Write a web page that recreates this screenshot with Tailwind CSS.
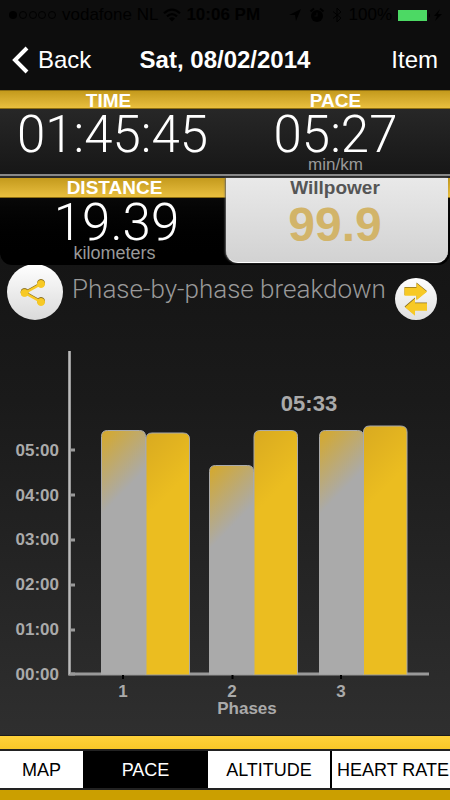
<!DOCTYPE html>
<html lang="en">
<head>
<meta charset="utf-8">
<meta name="viewport" content="width=device-width, initial-scale=1">
<title>Workout – Pace</title>
<script src="https://cdn.jsdelivr.net/npm/@tailwindcss/browser@4"></script>
</head>
<body class="flex min-h-screen flex-col bg-linear-to-b from-[#0c0c0c] via-[#1a1a1a] to-[#333333] font-['Liberation_Sans',sans-serif] text-white">

<header class="bg-[#0d0d0d]">
  <div class="flex h-7 items-center gap-1 px-2 pt-px text-[17px] text-black">
    <svg class="h-4 w-12 shrink-0" viewBox="0 0 48 16" aria-hidden="true">
      <circle cx="5" cy="8" r="4"/>
      <g fill="none" stroke="#000"><circle cx="15" cy="8" r="3.5"/><circle cx="25" cy="8" r="3.5"/><circle cx="34" cy="8" r="3.5"/><circle cx="44" cy="8" r="3.5"/></g>
    </svg>
    <span class="whitespace-nowrap pl-0.5">vodafone NL</span>
    <svg class="h-4 w-5 shrink-0" viewBox="0 0 20 16" aria-hidden="true">
      <g fill="none" stroke="#000" stroke-width="2.2"><path d="M2 6.2Q10-1 18 6.2"/><path d="M5 9.4Q10 4.800 15 9.400"/></g><path d="M7 11.500Q10 9 13 11.500L10 14.500Z"/>
    </svg>
    <span class="whitespace-nowrap font-bold">10:06 PM</span>
    <div class="ml-auto flex items-center gap-1.5">
      <svg class="h-4 w-4" viewBox="0 0 16 16" aria-hidden="true"><path d="M2 8 14 2 9 14 8 8Z"/></svg>
      <svg class="h-4 w-4" viewBox="0 0 16 16" aria-hidden="true"><circle cx="8" cy="9" r="6"/><path d="M1.500 4.500 5 1.500M14.500 4.500 11 1.500" stroke="#000" stroke-width="2"/><path d="M8 5.500V9H5.500" fill="none" stroke="#0d0d0d" stroke-width="1.200"/></svg>
      <svg class="h-4 w-3" viewBox="0 0 12 16" aria-hidden="true"><path d="M2 4.500 10 11 6 15V1L10 5 2 11.500" fill="none" stroke="#000" stroke-width="1"/></svg>
      <span>100%</span>
      <svg class="h-4 w-11" viewBox="0 0 44 16" aria-hidden="true"><rect y="3" width="29" height="11" fill="#4cd964"/><path d="M31 6q2 2.500 0 5zM42 2 36 9h3l-2 5 7-7h-4z"/></svg>
    </div>
  </div>
  <nav class="grid h-[62px] grid-cols-[1fr_auto_1fr] items-center px-3 pt-0.5 text-2xl">
    <a href="#" class="flex items-center gap-2">
      <svg class="h-7 w-[18px]" viewBox="0 0 18 28" aria-hidden="true"><path d="M15 2 3 14 15 26" fill="none" stroke="#fff" stroke-width="4"/></svg>
      <span>Back</span>
    </a>
    <h1 class="font-bold">Sat, 08/02/2014</h1>
    <button type="button" class="justify-self-end">Item</button>
  </nav>
</header>

<main class="flex grow flex-col">
  <section aria-label="Summary">
    <div class="grid grid-cols-2 border-b-2 border-[#888] bg-linear-to-b from-[#2c2c2c] to-[#171717] text-center">
      <div>
        <h2 class="h-[19px] border-y border-[#8e6e12] bg-linear-to-b from-[#c49a1c] to-[#e9bf3e] pr-2 text-[19px] leading-5 font-bold">TIME</h2>
        <p class="h-[65px] font-['Roboto'] text-[51px] leading-[52px] font-light">01:45:45</p>
      </div>
      <div>
        <h2 class="h-[19px] border-y border-[#8e6e12] bg-linear-to-b from-[#c49a1c] to-[#e9bf3e] pr-1 text-[19px] leading-5 font-bold">PACE</h2>
        <p class="h-[46px] pr-1 font-['Roboto'] text-[51px] leading-[52px] font-light">05:27</p>
        <p class="h-[19px] pr-1 text-[17px] leading-5 text-[#999]">min/km</p>
      </div>
    </div>
    <div class="relative rounded-b-xl border-t-2 border-[#2a2a2a] bg-linear-to-b from-[#111] to-black">
      <div class="absolute inset-x-0 top-0 h-5 border-b border-[#8e6e12] bg-linear-to-b from-[#c49a1c] to-[#e9bf3e]"></div>
      <div class="relative grid grid-cols-2 text-center">
        <div class="pl-1">
          <h2 class="h-5 text-[19px] leading-5 font-bold">DISTANCE</h2>
          <p class="h-[46px] pl-1 font-['Roboto'] text-[51px] leading-[50px] font-light">19.39</p>
          <p class="h-[21px] text-lg leading-[18px] text-[#999]">kilometers</p>
        </div>
        <div class="mr-[2px] mb-[2px] ml-px rounded-b-xl border-b border-white bg-linear-to-b from-[#e9e9e9] to-[#d2d2d2] shadow-[-1px_0_2px_#666]">
          <h2 class="h-5 pr-1 text-[19px] leading-[19px] font-bold text-[#555]">Willpower</h2>
          <p class="pr-1 text-5xl leading-[54px] font-bold text-[#d2b469]">99.9</p>
        </div>
      </div>
    </div>
  </section>

  <section class="flex grow flex-col" aria-labelledby="breakdown">
    <div class="flex h-14 items-start justify-between pr-[13px] pl-[7px]">
      <button type="button" aria-label="Share" class="-mt-px size-14 shrink-0 rounded-full bg-linear-to-b from-white to-[#dadada]">
        <svg class="size-14" viewBox="0 0 56 56" aria-hidden="true">
          <g transform="translate(0 -1)" fill="#8b7020" stroke="#8b7020"><path d="M34 20 18 29 34 38" fill="none" stroke-width="2"/><circle cx="34" cy="20" r="3.500"/><circle cx="17.500" cy="29" r="3.500"/><circle cx="34" cy="38" r="3.500"/></g>
          <g fill="#f7c925" stroke="#f7c925"><path d="M34 20 18 29 34 38" fill="none" stroke-width="2.500"/><circle cx="34" cy="20" r="3.500"/><circle cx="17.500" cy="29" r="3.500"/><circle cx="34" cy="38" r="3.500"/></g>
        </svg>
      </button>
      <h2 id="breakdown" class="pt-1 font-['Roboto'] text-[26px] leading-10 font-light whitespace-nowrap text-[#999]">Phase-by-phase breakdown</h2>
      <button type="button" aria-label="Compare" class="mt-[13px] size-[42px] shrink-0 rounded-full bg-linear-to-b from-white to-[#dfdfdf]">
        <svg class="size-[42px]" viewBox="0 0 42 42" aria-hidden="true">
          <path d="M9.500 9H21.500V4.500L32 13 21.500 21.500V17H9.500ZM32 24.500H20V19.500L9.500 28.500 20 37V32H32Z" fill="#8b7020"/>
          <path d="M9.500 9.800H21.500V5.300L32 13.800 21.500 22.300V17.800H9.500ZM32 25.300H20V20.500L10 29.300 20 37.800V32.800H32Z" fill="#f7c925"/>
        </svg>
      </button>
    </div>

    <svg class="w-full grow" viewBox="0 321 450 414" role="img" aria-label="Pace for each phase">
      <defs>
        <linearGradient id="fadeA" gradientUnits="userSpaceOnUse" x1="0" y1="0" x2="42" y2="41">
          <stop offset="0" stop-color="#d6a929"/><stop offset="1" stop-color="#aaaaaa"/>
        </linearGradient>
        <linearGradient id="fadeB" gradientUnits="userSpaceOnUse" x1="0" y1="0" x2="42" y2="41">
          <stop offset="0" stop-color="#d9aa20"/><stop offset="1" stop-color="#ebbd20"/>
        </linearGradient>
      </defs>
      <path d="M68 674H429" stroke="#999" stroke-width="3"/>
      <path d="M123 675v4M232.500 675v4M341 675v4" stroke="#000" stroke-width="2"/>
      <g stroke="#aaa" stroke-width="1">
        <path transform="translate(101.500 430.500)" d="M0 244V6Q0 0 6 0H38Q44 0 44 6V244" fill="url(#fadeA)"/>
        <path transform="translate(146 433)" d="M0 241.500V6Q0 0 6 0H37Q43.500 0 43.500 6V241.500" fill="url(#fadeB)"/>
        <path transform="translate(209.500 465.500)" d="M0 209V6Q0 0 6 0H38Q44 0 44 6V209" fill="url(#fadeA)"/>
        <path transform="translate(254 430.500)" d="M0 244V6Q0 0 6 0H37Q43.500 0 43.500 6V244" fill="url(#fadeB)"/>
        <path transform="translate(319.500 430.500)" d="M0 244V6Q0 0 6 0H38Q44 0 44 6V244" fill="url(#fadeA)"/>
        <path transform="translate(363.500 426)" d="M0 248.500V6Q0 0 6 0H37Q43.500 0 43.500 6V248.500" fill="url(#fadeB)"/>
      </g>
      <path d="M69.500 351V675M69 450h6M69 495h6M69 540h6M69 585h6M69 630h6M69 674h6" fill="none" stroke="#999" stroke-width="3"/>
      <path d="M69.500 351V674" stroke="#bbb" stroke-width="1"/>
      <g fill="#aaa" class="text-[17px] font-bold" text-anchor="end">
        <text x="59" y="456">05:00</text>
        <text x="59" y="501">04:00</text>
        <text x="59" y="545">03:00</text>
        <text x="59" y="590">02:00</text>
        <text x="59" y="635">01:00</text>
        <text x="59" y="680">00:00</text>
      </g>
      <g fill="#aaa" class="text-[17px] font-bold" text-anchor="middle">
        <text x="123" y="697">1</text>
        <text x="232" y="697">2</text>
        <text x="341" y="697">3</text>
        <text x="247" y="714">Phases</text>
      </g>
      <text x="309" y="411" fill="#aaa" class="text-[22px] font-bold" text-anchor="middle">05:33</text>
    </svg>
  </section>
</main>

<footer class="border-t border-[#1c1c1c] bg-[#cb9f00]">
  <div class="h-[13px] bg-linear-to-b from-[#ffd23a] to-[#f8c828]"></div>
  <nav aria-label="Charts" class="mb-[10px] grid h-[41px] grid-cols-[83fr_125fr_122fr_120fr] border-y-2 border-[#222] bg-white text-lg text-black">
    <button type="button" class="min-w-0 whitespace-nowrap">MAP</button>
    <button type="button" aria-pressed="true" class="min-w-0 bg-black whitespace-nowrap text-white">PACE</button>
    <button type="button" class="min-w-0 whitespace-nowrap">ALTITUDE</button>
    <button type="button" class="min-w-0 border-l-2 border-black pl-1 whitespace-nowrap">HEART RATE</button>
  </nav>
</footer>
</body>
</html>
